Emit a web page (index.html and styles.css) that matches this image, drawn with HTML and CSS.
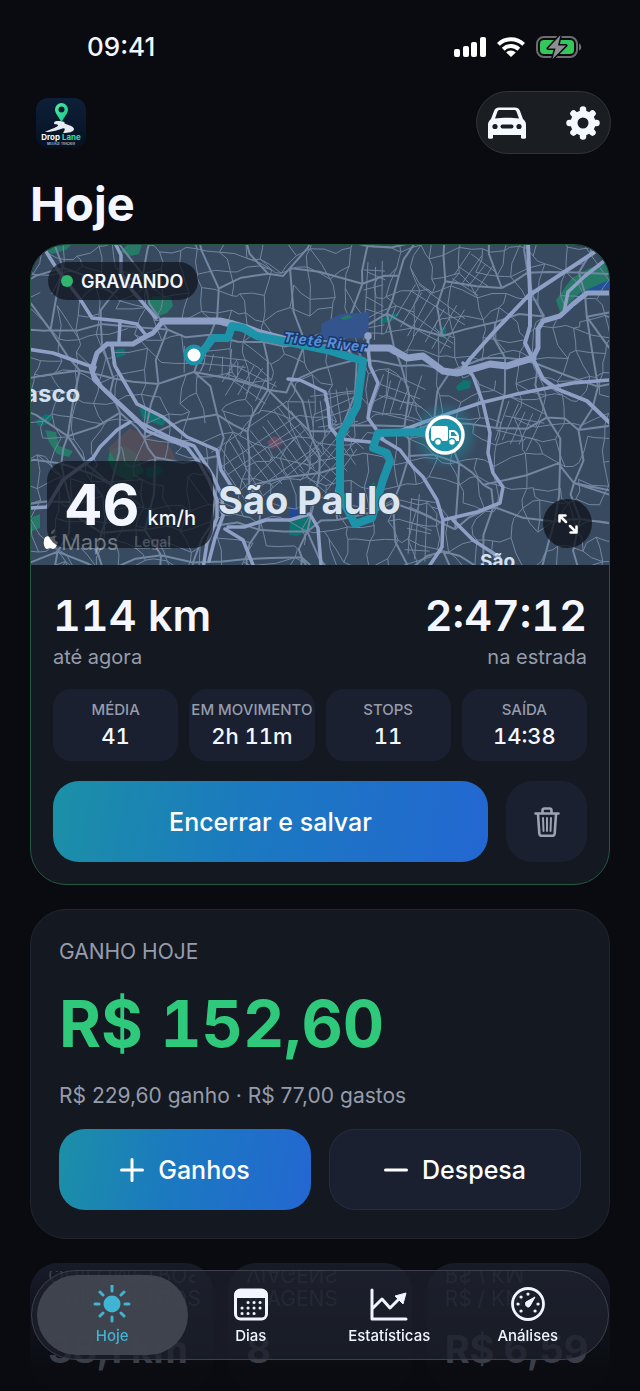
FILE: index.html
```html
<!DOCTYPE html>
<html lang="pt-BR">
<head>
<meta charset="UTF-8">
<meta name="viewport" content="width=device-width, initial-scale=1.0">
<title>Drop Lane - Hoje</title>
<link rel="stylesheet" href="styles.css">
</head>
<body>

<div class="status-bar">
  <span class="time">09:41</span>
  <div class="status-icons">
    <svg width="32" height="20" viewBox="0 0 32 20" fill="#fff">
      <rect x="0" y="12" width="6" height="8" rx="2"/>
      <rect x="9" y="9" width="6" height="11" rx="2"/>
      <rect x="17" y="5" width="6" height="15" rx="2"/>
      <rect x="26" y="0" width="6" height="20" rx="2"/>
    </svg>
    <svg width="28" height="20" viewBox="0 0 28 20">
      <g fill="none" stroke="#fff" stroke-width="4">
        <path d="M1.4 7.4a18 18 0 0 1 25.2 0"/>
        <path d="M6.2 12.2a11.2 11.2 0 0 1 15.6 0"/>
      </g>
      <path d="M9.2 15.4a7 7 0 0 1 9.6 0L14 20z" fill="#fff"/>
    </svg>
    <svg width="46" height="24" viewBox="0 0 46 24">
      <rect x="1" y="2" width="40" height="20" rx="7" fill="none" stroke="#6b6d70" stroke-width="2"/>
      <path d="M43 8.500c3 1 3 6 0 7z" fill="#6b6d70"/>
      <rect x="4" y="5" width="34" height="14" rx="4" fill="#34c759"/>
      <path d="M24.500 0L12 13.500h7.500L16.500 24 30 10.500h-8z" fill="#8d9092" stroke="#090b10" stroke-width="3" stroke-linejoin="round" paint-order="stroke"/>
    </svg>
  </div>
</div>

<header class="top">
  <svg class="logo" viewBox="0 0 50 50" role="img" aria-label="Drop Lane">
    <defs>
      <linearGradient id="logoBg" x1="0" y1="0" x2="0" y2="1">
        <stop offset="0" stop-color="#0d2038"/>
        <stop offset="1" stop-color="#061122"/>
      </linearGradient>
      <linearGradient id="pin" x1="0" y1="0" x2="1" y2="1">
        <stop offset="0" stop-color="#4df0a0"/>
        <stop offset="1" stop-color="#12c48c"/>
      </linearGradient>
    </defs>
    <rect width="50" height="50" rx="12" fill="url(#logoBg)"/>
    <path d="M9 34c5-3 14-5 13-7-1-1-4 0-4-2 0-3 7-2 11-1-4 2 9 3 9 7 0 3-6 4-11 4 3-4 2-6-2-4-4 1-8 3-16 3z" fill="#e6ebf2"/>
    <path d="M25.500 24C22 18 19 15 19 11.500a6.500 6.500 0 0 1 13 0C32 15 29 18 25.500 24z" fill="url(#pin)"/>
    <circle cx="25.500" cy="11.500" r="3" fill="#0b1b31"/>
    <text x="25" y="42" class="logo-name">Drop <tspan fill="#2de0a0">Lane</tspan></text>
    <text x="25" y="47" class="logo-sub">MILEAGE TRACKER</text>
  </svg>
  <div class="actions">
    <button type="button" aria-label="Veículo">
      <svg width="40" height="32" viewBox="0 0 40 32">
        <path d="M1 31V18c0-3 1-4 3-6l3-8c1-3 3-3.500 5-3.500h16c2 0 4 .5 5 3.500l3 8c2 2 3 3 3 6v13c0 1-5 1-5 0v-3H6v3c0 1-5 1-5 0z" fill="#f4f8ff"/>
        <path d="M8 11.500l2.500-7C11 3.300 12 3 13 3h14c1 0 2 .3 2.500 1.500l2.500 7c-7-1-17-1-24 0z" fill="#1a1e23"/>
        <circle cx="8" cy="19.500" r="2.600" fill="#1a1e23"/>
        <circle cx="32" cy="19.500" r="2.600" fill="#1a1e23"/>
        <rect x="13.500" y="17.500" width="13" height="4" rx="2" fill="#1a1e23"/>
      </svg>
    </button>
    <button type="button" aria-label="Ajustes">
      <svg width="34" height="34" viewBox="-17 -17 34 34">
        <g stroke="#f4f8ff" stroke-width="6.500" stroke-linecap="round">
          <path d="M0-13.500V-10M0 13.500V10M-13.500 0H-10M13.500 0H10M-9.500-9.500l3 3M9.500 9.500l-3-3M-9.500 9.500l3-3M9.500-9.500l-3 3"/>
        </g>
        <circle r="9" fill="none" stroke="#f4f8ff" stroke-width="7"/>
      </svg>
    </button>
  </div>
</header>

<main>
  <h1>Hoje</h1>

  <section class="card trip">
    <div class="map">
      <svg class="map-canvas" viewBox="30 245 580 320" preserveAspectRatio="xMidYMid slice" role="img" aria-label="Mapa do percurso em São Paulo">
        <defs>
          <radialGradient id="glow">
            <stop offset="0.4" stop-color="#1f93ab" stop-opacity="0.6"/>
            <stop offset="1" stop-color="#1f93ab" stop-opacity="0"/>
          </radialGradient>
        </defs>
        <rect x="30" y="245" width="580" height="320" fill="#384a60"/>

        <!-- parks and water -->
        <g fill="#257a68">
          <path d="M46 251l12-7h14l-6 6-14 4zM120 252l8-8h14l-3 10-8 2zM147 303l6-7 18 1 2 9-6 7-11 4z"/>
          <path d="M45 430l11 2 3 14 14 5-4 6-12-3-8-12zM110 450l14-5 12 8 8 19-14 9-16-7-6-14z"/>
          <path d="M556 300l16-22 18-10 20-8v26l-28 5-22 21z"/>
          <path d="M30 518l10-4v14l-10 4z"/>
        </g>
        <g fill="#0e7470">
          <path d="M139 408l10 2 18 7-4 9-20-7z"/>
          <path d="M36 421l10-7 8 2-6 8-10 2zM115 350l9-2 2 7-9 3z"/>
          <path d="M380 320l10-6h9l-5 6-13 4zM439 328l7-1v11l-6-1zM456 387l7-7 8 1-1 7-12 3z"/>
          <path d="M290 522l20-6 4 12-17 8-8-1zM146 468l14-3 4 6-10 8-8-3zM368 487l6-5 3 7-5 5z"/>
        </g>
        <path d="M566 308l16-16 27-12v8l-24 8-18 18z" fill="#22509a"/>
        <path d="M290 508l6-4 3 11-9 3zM366 484l5 1-1 4zM146 309l4-2 2 5z" fill="#20489a"/>
        <path d="M108 448l22-20 40 18 6 14-60 2z" fill="#594f58" opacity=".75"/>
        <path d="M267 442l7-6 9 4-2 5-9 4z" fill="#6d4b60"/>

        <g id="streets" fill="none" stroke="#7286a0" stroke-linejoin="round"></g>

        <path d="M321 324l20-10 28-2-1 26-46 1z" fill="#33548c"/>
        <path d="M340 318l8-3 5 2-9 3z" fill="#257a68"/>

        <!-- highways -->
        <g fill="none" stroke="#8e9fc5" stroke-width="3.500" stroke-linejoin="round" stroke-linecap="round">
          <path d="M45 250l12 19 23 30 12 19 28 3 17 3 8 10"/>
          <path d="M115 243l6 12v18l10 16 25 29"/>
          <path d="M120 321l-1 20"/>
          <path stroke-width="5" d="M92 369l5-16 10-9h26l10-6 10-5 10-12"/>
          <path stroke-width="7" d="M163 321h57l13 3 14 4 13 5 23 6 40 9 45 0h22l17 10 16-2 20 15 14 2 16-4 17-5 17 2 26-8"/>
          <path stroke-width="5" d="M533 358l5-10v-19l5-8 17-5 13-12 14-11h23"/>
          <path d="M27 349l26 4 37 13 4 14 13 13 40 38 20 8 20 8 13 17 9 16 8 20v18l-10 25-4 26"/>
          <path d="M95 367l-2 6 8 13 40 37 30 15 23 8 9 14 10 16 9 20 1 20-8 22-6 23"/>
          <path d="M112 346l3 20 22 38 26 13 24 20 30 13 4 20 12 19"/>
          <path d="M130 422l-13 8-17 17-7 11-30 22-16 27-17 1"/>
          <path stroke-width="4" d="M460 373l10-14 23-26 35-37 65-43 12-8"/>
          <path stroke-width="4" d="M528 243l2 50v33l-5 17 8 16 10 20 14 10 30 12 23 22"/>
          <path d="M608 258l-23 18-17 16-4 20"/>
          <path d="M463 363l10 13 10 27 7 30-2 20 5 20 10 14-3 16-23 9-34 8-6-20-14-23-10-10-13-17-20-12"/>
          <path d="M443 520l-1 27-12 18M453 520l20 20 26 17"/>
          <path d="M610 380l-37 3-56 11-37 9-50 17-30 11"/>
          <path d="M368 348l2 18 8 17-8 23-2 12 15 21"/>
          <path d="M288 379l12 1 25 12 3 14 2 21 10 12 30 3"/>
          <path d="M228 527l16 0 22-7 24 0 20-6 8 14 3 37M225 529l18 11 10 25"/>
          <path d="M368 334v16" stroke-width="3"/>
          <circle cx="368" cy="336" r="2"/>
        </g>

        <path d="M194 354l9-3 10-13 15 0 4-12 11 2 14 8 26 5 44 9 36 11-6 45-17 31 0 56 5 12 10 19 17-6 11-38 7-19-3-8-14-5 5-15 49-1h18" fill="none" stroke="#1d93aa" stroke-width="8" stroke-linejoin="round"/>
        <circle cx="194" cy="355" r="8.500" fill="#fff" stroke="#1d93aa" stroke-width="4"/>

        <text x="283" y="342" class="river" transform="rotate(7 283 342)">Tietê River</text>
        <text x="24" y="402" class="town">asco</text>
        <text x="218" y="514" class="city">São Paulo</text>
        <text x="480" y="568" class="town small">São</text>

        <circle cx="445" cy="435" r="34" fill="url(#glow)"/>
        <circle cx="445" cy="435" r="18" fill="#1d93aa" stroke="#fff" stroke-width="3.500"/>
        <g fill="#fff">
          <rect x="431" y="426" width="17" height="15" rx="2"/>
          <path d="M449 430h5c3 1 5 4 5 7v4h-10z"/>
          <path d="M451 432h3l3 4h-6z" fill="#1d93aa"/>
          <circle cx="438" cy="442" r="3.500" stroke="#1d93aa" stroke-width="1.500"/>
          <circle cx="452" cy="442" r="3.500" stroke="#1d93aa" stroke-width="1.500"/>
        </g>
        <path d="M57 536c-2 1-3 3-1 5 0 0 1 1 2 1-1 4-3 7-5 7-1 0-2-1-3-1s-2 1-3 1c-2 0-4-5-3-8 0-4 3-6 6-4 2 0 3-2 7-1zM51 534c0-3 2-4 4-5 0 3-2 5-4 5z" fill="#fff"/>
      </svg>
      <div class="badge"><i class="dot"></i>GRAVANDO</div>
      <div class="speed"><strong>46</strong><span>km/h</span></div>
      <div class="attribution"><span>Maps</span><a href="#legal">Legal</a></div>
      <button type="button" class="expand" aria-label="Expandir mapa">
        <svg width="20" height="20" viewBox="0 0 20 20" fill="none" stroke="#fff" stroke-width="2.500" stroke-linecap="round" stroke-linejoin="round">
          <path d="M1.500 7.500v-6h6M1.500 1.500L8 8M18.500 12.500v6h-6M18.500 18.500L12 12"/>
        </svg>
      </button>
    </div>

    <div class="trip-body">
      <div class="totals">
        <div><strong>114 km</strong><span>até agora</span></div>
        <div class="right"><strong>2:47:12</strong><span>na estrada</span></div>
      </div>
      <dl class="chips">
        <div><dt>MÉDIA</dt><dd>41</dd></div>
        <div><dt>EM MOVIMENTO</dt><dd>2h 11m</dd></div>
        <div><dt>STOPS</dt><dd>11</dd></div>
        <div><dt>SAÍDA</dt><dd>14:38</dd></div>
      </dl>
      <div class="buttons">
        <button type="button" class="btn primary">Encerrar e salvar</button>
        <button type="button" class="btn trash" aria-label="Descartar">
          <svg width="26" height="30" viewBox="0 0 26 30" fill="none" stroke="#9da3b1" stroke-width="2.600" stroke-linecap="round" stroke-linejoin="round">
            <path d="M1.500 6.500h23M8.500 6V3.500c0-1.500 1-2 2-2h5c1 0 2 .5 2 2V6M4 7l1.300 19.500c.1 1.500 1 2.300 2.300 2.300h10.800c1.300 0 2.200-.8 2.300-2.300L22 7"/>
            <path d="M9 11l.5 13M13 11v13M17 11l-.5 13" stroke-width="2"/>
          </svg>
        </button>
      </div>
    </div>
  </section>

  <section class="card earnings">
    <h2>GANHO HOJE</h2>
    <p class="amount">R$ 152,60</p>
    <p class="detail">R$ 229,60 ganho · R$ 77,00 gastos</p>
    <div class="buttons even">
      <button type="button" class="btn primary">
        <svg width="24" height="24" viewBox="0 0 24 24" stroke="#fff" stroke-width="3" stroke-linecap="round"><path d="M12 1.500v21M1.500 12h21"/></svg>
        Ganhos
      </button>
      <button type="button" class="btn secondary">
        <svg width="24" height="24" viewBox="0 0 24 24" stroke="#fff" stroke-width="3" stroke-linecap="round"><path d="M1.500 12h21"/></svg>
        Despesa
      </button>
    </div>
  </section>

  <section class="tiles">
    <div class="tile"><span>QUILÔMETROS</span><strong>38,1 km</strong></div>
    <div class="tile"><span>VIAGENS</span><strong>8</strong></div>
    <div class="tile"><span>R$ / KM</span><strong>R$ 6,59</strong></div>
  </section>
</main>

<nav class="tabbar">
  <a href="#hoje" class="active">
    <svg width="38" height="38" viewBox="-19 -19 38 38">
      <circle r="8.500" fill="#3fb4d3"/>
      <path d="M0-17v-4M0 13v4M-17 0h4M13 0h4M0-13v-4M-12-12l3 3M12 12l-3-3M-12 12l3-3M12-12l-3 3" stroke="#3fb4d3" stroke-width="3" stroke-linecap="round"/>
    </svg>
    Hoje
  </a>
  <a href="#dias">
    <svg width="38" height="38" viewBox="-19 -19 38 38">
      <rect x="-15.500" y="-14" width="31" height="29" rx="5" fill="none" stroke="#f1f5ff" stroke-width="3"/>
      <path d="M-16-13h32v7h-32z" fill="#f1f5ff"/>
      <path d="M-3-1.500h.1M3-1.500h.1M9-1.500h.1M-9 4h.1M-3 4h.1M3 4h.1M9 4h.1M-9 9.500h.1M-3 9.500h.1M3 9.500h.1" stroke="#f1f5ff" stroke-width="3" stroke-linecap="round"/>
    </svg>
    Dias
  </a>
  <a href="#estatisticas">
    <svg width="38" height="38" viewBox="-19 -19 38 38">
      <path d="M-17-14v29h34M-16 4l9-9 8 9 10-10" fill="none" stroke="#f1f5ff" stroke-width="3" stroke-linecap="round" stroke-linejoin="round"/>
      <path d="M17-11L6-8l8 8z" fill="#f1f5ff" stroke="#f1f5ff" stroke-linejoin="round"/>
    </svg>
    Estatísticas
  </a>
  <a href="#analises">
    <svg width="38" height="38" viewBox="-19 -19 38 38">
      <circle r="15.500" fill="none" stroke="#f1f5ff" stroke-width="2.800"/>
      <path d="M-10 0h.1M0-10v.1M-7-7h.1M10 0h.1M-7 7h.1M7 7h.1" stroke="#f1f5ff" stroke-width="3.200" stroke-linecap="round"/>
      <path d="M7-7L2 2c-2 3-6-1-4-4z" fill="#f1f5ff" stroke="#f1f5ff" stroke-linejoin="round"/>
    </svg>
    Análises
  </a>
</nav>

<script src="map.js"></script>
</body>
</html>
```

FILE: styles.css
```css
* {
  box-sizing: border-box;
}

body {
  margin: 0;
  min-height: 100vh;
  background-color: #090b10;
  color: #f4f7ff;
  font-family: Inter, "Noto Sans", sans-serif;
}

h1, h2, p, dl, dd {
  margin: 0;
}

button {
  font-family: inherit;
  color: inherit;
  border: 0;
  padding: 0;
  background: none;
  cursor: pointer;
}

svg {
  display: block;
}

.status-bar {
  display: flex;
  justify-content: space-between;
  align-items: center;
  height: 91px;
  padding: 2px 58px 0 87px;
}

.time {
  font-size: 26px;
  font-weight: 500;
}

.status-icons {
  display: flex;
  align-items: center;
  gap: 11px;
}

.top {
  display: flex;
  justify-content: space-between;
  align-items: center;
  padding: 0 29px 0 36px;
}

.logo {
  width: 50px;
  height: 50px;
}

.logo-name {
  font-size: 8px;
  font-weight: 700;
  fill: #fff;
  text-anchor: middle;
}

.logo-sub {
  font-size: 3px;
  font-weight: 600;
  fill: #b9c4d4;
  text-anchor: middle;
}

.actions {
  display: flex;
  align-items: center;
  justify-content: space-between;
  width: 135px;
  height: 63px;
  padding: 0 10px;
  border: 1px solid #303438;
  border-radius: 32px;
  background-color: #1a1e23;
}

main {
  padding: 0 30px;
}

h1 {
  padding: 21px 0 11px;
  font-size: 47px;
  line-height: 58px;
  font-weight: 700;
}

.card {
  margin-bottom: 24px;
  border: 1px solid #20252f;
  border-radius: 36px;
  background-color: #131821;
  overflow: hidden;
}

.trip {
  border-color: #215a43;
}

.map {
  position: relative;
  height: 320px;
}

.map-canvas {
  width: 100%;
  height: 100%;
}

.river {
  font-size: 14px;
  font-weight: 700;
  font-style: italic;
  letter-spacing: 1px;
  fill: #5a8fd6;
  stroke: #17386f;
  stroke-width: 3px;
  paint-order: stroke;
}

.town {
  font-size: 24px;
  font-weight: 700;
  fill: #d3e0ee;
}

.town.small {
  font-size: 19px;
}

.city {
  font-size: 38px;
  font-weight: 700;
  fill: #dbe6f2;
  stroke: #384a60;
  stroke-width: 2px;
  paint-order: stroke;
}

.attribution {
  position: absolute;
  left: 30px;
  bottom: 9px;
  display: flex;
  align-items: center;
  gap: 16px;
  color: rgba(195, 202, 211, 0.5);
  font-size: 22px;
  line-height: 28px;
}

.attribution a {
  color: rgba(195, 202, 211, 0.3);
  font-size: 14px;
  font-weight: 600;
}

.badge {
  position: absolute;
  top: 17px;
  left: 17px;
  display: flex;
  align-items: center;
  gap: 8px;
  height: 38px;
  padding: 0 15px 0 13px;
  border-radius: 19px;
  background-color: rgba(13, 17, 25, 0.7);
  font-size: 18px;
  font-weight: 600;
}

.dot {
  width: 12px;
  height: 12px;
  border-radius: 50%;
  background-color: #2fb56d;
}

.speed {
  position: absolute;
  left: 16px;
  bottom: 17px;
  display: flex;
  align-items: baseline;
  gap: 8px;
  height: 87px;
  padding: 0 17px;
  border-radius: 20px;
  background-color: rgba(13, 17, 25, 0.7);
  line-height: 87px;
}

.speed strong {
  font-size: 57px;
}

.speed span {
  font-size: 20px;
  font-weight: 500;
}

.expand {
  position: absolute;
  right: 17px;
  bottom: 17px;
  display: flex;
  align-items: center;
  justify-content: center;
  width: 49px;
  height: 49px;
  border-radius: 50%;
  background-color: rgba(13, 17, 25, 0.75);
}

.trip-body {
  padding: 26px 22px 22px;
}

.totals {
  display: flex;
  justify-content: space-between;
}

.totals strong {
  display: block;
  font-size: 43px;
  line-height: 48px;
  font-weight: 600;
  font-variant-numeric: tabular-nums;
}

.totals span {
  display: block;
  margin-top: 4px;
  color: #969cab;
  font-size: 20px;
  line-height: 28px;
}

.right {
  text-align: right;
}

.chips {
  display: grid;
  grid-template-columns: repeat(4, minmax(0, 1fr));
  gap: 11px;
  margin: 18px 0 20px;
}

.chips div {
  display: flex;
  flex-direction: column;
  align-items: center;
  justify-content: center;
  height: 72px;
  border-radius: 18px;
  background-color: #1a2030;
}

.chips dt {
  color: #969cab;
  font-size: 15px;
  line-height: 22px;
  font-weight: 500;
  white-space: nowrap;
}

.chips dd {
  font-size: 22px;
  line-height: 30px;
  font-weight: 500;
  font-variant-numeric: tabular-nums;
}

.buttons {
  display: grid;
  grid-template-columns: 1fr 81px;
  gap: 18px;
}

.buttons.even {
  grid-template-columns: 1fr 1fr;
}

.btn {
  display: flex;
  align-items: center;
  justify-content: center;
  gap: 14px;
  height: 81px;
  border-radius: 26px;
  font-size: 25px;
  font-weight: 500;
  color: #fff;
}

.primary {
  background-image: linear-gradient(100deg, #1b90a7, #1b79c0 45%, #2367d2);
}

.trash {
  background-color: #1a2030;
}

.secondary {
  border: 1px solid #262d3b;
  background-color: #1a2030;
}

.earnings {
  padding: 28px;
}

.earnings h2 {
  color: #969cab;
  font-size: 21px;
  line-height: 28px;
  font-weight: 400;
}

.amount {
  padding: 15px 0;
  color: #2fc97b;
  font-size: 64px;
  line-height: 86px;
  font-weight: 700;
  font-variant-numeric: tabular-nums;
}

.detail {
  margin-bottom: 19px;
  color: #969cab;
  font-size: 21px;
  line-height: 28px;
}

.tiles {
  display: grid;
  grid-template-columns: repeat(3, minmax(0, 1fr));
  gap: 15px;
}

.tile {
  height: 126px;
  padding: 22px 18px 0;
  border-radius: 28px;
  background-image: linear-gradient(#171b28, #0a0c11 85%);
  color: #3a3e48;
  overflow: hidden;
}

.tile span {
  display: block;
  font-size: 21px;
  line-height: 28px;
  -webkit-box-reflect: above -3px linear-gradient(#000 60%, transparent 60%);
}

.tile strong {
  display: block;
  margin-top: 14px;
  font-size: 38px;
  line-height: 44px;
  white-space: nowrap;
}

.tabbar {
  position: fixed;
  left: 31px;
  right: 31px;
  bottom: 31px;
  display: grid;
  grid-template-columns: repeat(4, 1fr);
  height: 90px;
  padding: 4px 11px;
  border: 1px solid #3c404b;
  border-radius: 45px;
  background-color: rgba(29, 33, 46, 0.75);
}

.tabbar a {
  display: flex;
  flex-direction: column;
  align-items: center;
  justify-content: center;
  gap: 3px;
  margin: 0 -6px;
  border-radius: 40px;
  color: #f1f5ff;
  font-size: 15px;
  line-height: 20px;
  font-weight: 500;
  text-decoration: none;
}

.tabbar .active {
  background-color: rgba(68, 72, 83, 0.9);
  color: #3fb4d3;
}
```

FILE: map.js
```js
// small streets: a jittered mesh plus a few denser blocks
var streets = document.getElementById('streets');
var seed = 11;

function rnd() {
  seed = (seed * 16807) % 2147483647;
  return seed / 2147483647;
}

function draw(d, width) {
  var path = document.createElementNS('http://www.w3.org/2000/svg', 'path');
  path.setAttribute('d', d);
  path.setAttribute('stroke-width', width);
  streets.appendChild(path);
}

function mesh(step, jitter, keep) {
  var cols = Math.ceil(620 / step) + 1;
  var rows = Math.ceil(350 / step) + 1;
  var nodes = [];
  var d = '';

  for (var r = 0; r < rows; r++) {
    nodes.push([]);
    for (var c = 0; c < cols; c++) {
      nodes[r].push([15 + c * step + (rnd() - 0.5) * jitter, 230 + r * step + (rnd() - 0.5) * jitter]);
    }
  }

  function link(a, b) {
    var mx = (a[0] + b[0]) / 2 + (rnd() - 0.5) * step * 0.3;
    var my = (a[1] + b[1]) / 2 + (rnd() - 0.5) * step * 0.3;
    d += 'M' + a[0].toFixed(1) + ' ' + a[1].toFixed(1) + 'L' + mx.toFixed(1) + ' ' + my.toFixed(1) + 'L' + b[0].toFixed(1) + ' ' + b[1].toFixed(1);
  }

  for (r = 0; r < rows - 1; r++) {
    for (c = 0; c < cols - 1; c++) {
      if (rnd() < keep) link(nodes[r][c], nodes[r][c + 1]);
      if (rnd() < keep) link(nodes[r][c], nodes[r + 1][c]);
      if (rnd() < 0.1) link(nodes[r][c], nodes[r + 1][c + 1]);
    }
  }
  return d;
}

draw(mesh(21, 17, 0.72), 1);
draw(mesh(48, 34, 0.9), 2);

// x, y, width, height, angle
var blocks = [
  [475, 275, 34, 28, 35], [250, 385, 50, 30, 28], [215, 362, 60, 16, 4],
  [270, 455, 90, 60, -35], [400, 395, 44, 36, 15], [375, 300, 20, 70, 2],
  [430, 320, 60, 40, 32], [335, 410, 44, 36, -10], [420, 530, 24, 60, 4],
  [520, 425, 40, 34, 20], [330, 460, 40, 60, 40]
];
var grid = '';

blocks.forEach(function (b) {
  var a = b[4] * Math.PI / 180;
  function point(x, y) {
    x += (rnd() - 0.5) * 5;
    y += (rnd() - 0.5) * 14;
    return (b[0] + x * Math.cos(a) - y * Math.sin(a)).toFixed(1) + ' ' + (b[1] + x * Math.sin(a) + y * Math.cos(a)).toFixed(1);
  }
  for (var x = -b[2] / 2; x <= b[2] / 2; x += 9) {
    grid += 'M' + point(x, -b[3] / 2) + 'L' + point(x, b[3] / 2);
  }
  for (var y = -b[3] / 2; y <= b[3] / 2; y += 12) {
    grid += 'M' + point(-b[2] / 2, y) + 'L' + point(b[2] / 2, y);
  }
});
draw(grid, 1);
```
